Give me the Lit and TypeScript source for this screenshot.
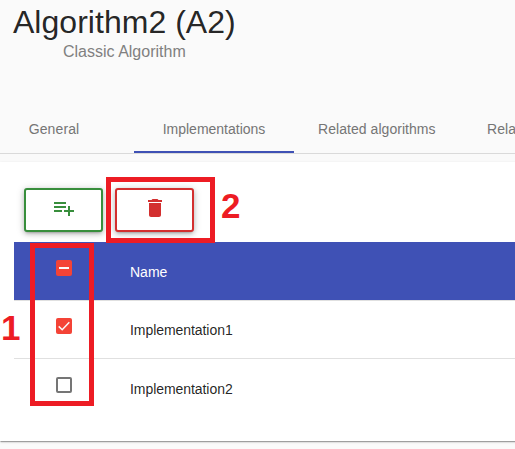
import { LitElement, html, css, svg } from "lit";
import { customElement, state } from "lit/decorators.js";

@customElement("app-root")
export class AppRoot extends LitElement {
  static styles = css`
    :host {
      display: block;
      position: relative;
      width: 515px;
      height: 449px;
      overflow: hidden;
      background: #fafafa;
      font-family: "Liberation Sans", Arial, sans-serif;
      color: rgba(0, 0, 0, 0.87);
    }
    * { box-sizing: border-box; }
    header { height: 105px; padding: 4px 0 0 13px; }
    h1 { margin: 0; font-size: 32px; line-height: 36px; font-weight: 400; white-space: nowrap; letter-spacing: 0.03px; }
    .subtitle { margin: 2px 0 0 50px; font-size: 16px; line-height: 20px; color: #808080; }
    nav {
      display: flex;
      height: 49px;
      margin-left: -26px;
      border-bottom: 1px solid #dadada;
      font-size: 14px;
      color: #757575;
    }
    .tab {
      flex: none;
      min-width: 160px;
      height: 48px;
      padding: 0 24px;
      line-height: 48px;
      text-align: center;
      white-space: nowrap;
    }
    .tab.first { letter-spacing: 0.1px; }
    .tab.wide { min-width: 169px; text-align: left; letter-spacing: 0.05px; }
    .tab.active { border-bottom: 2px solid #3f51b5; }
    .card {
      width: 540px;
      height: 279px;
      margin-top: 8px;
      padding: 26px 0 0 14px;
      background: #fff;
      box-shadow: 0 2px 1px -1px rgba(0, 0, 0, 0.2), 0 1px 1px 0 rgba(0, 0, 0, 0.14), 0 1px 3px 0 rgba(0, 0, 0, 0.12);
    }
    .actions { display: flex; gap: 12px; height: 54px; padding-left: 10px; }
    button {
      display: flex;
      align-items: center;
      justify-content: center;
      width: 79px;
      height: 44px;
      padding: 0 0 4px;
      border: 2px solid currentColor;
      border-radius: 3px;
      background: #fff;
      box-shadow: 0 3px 2px -2px rgba(0, 0, 0, 0.16), 0 2px 5px rgba(0, 0, 0, 0.18), 0 1px 9px rgba(0, 0, 0, 0.16);
    }
    .add { color: #388e3c; }
    .remove { color: #d32f2f; }
    button svg { width: 24px; height: 24px; fill: currentColor; flex: none; }
    .row {
      display: flex;
      align-items: center;
      height: 58px;
      border-top: 1px solid #e0e0e0;
      font-size: 14px;
      padding-left: 42px;
    }
    .row.head { background: #3f51b5; color: #fff; border-top: 0; }
    .row.last { height: 59px; }
    .box {
      flex: none;
      width: 16px;
      height: 16px;
      margin: 0 58px 6px 0;
      border-radius: 2px;
      border: 2px solid #757575;
    }
    .row:not(.head) .box { margin-bottom: 7px; }
    .row.last .box { margin-bottom: 6px; }
    .box.on { border: 0; background: #f44336; }
    .box svg { display: block; width: 16px; height: 16px; fill: none; stroke: #fafafa; }
    .name { line-height: 16px; padding-top: 2px; }
    .row:not(.head) .name { letter-spacing: -0.06px; padding-top: 1px; }
    .row.last .name { padding-top: 2px; }
    .mark { position: absolute; border: 5px solid #ed1c24; }
    .mark.rows { left: 30px; top: 243px; width: 64px; height: 163px; }
    .mark.delete { left: 106px; top: 177px; width: 109px; height: 66px; }
    .digit {
      position: absolute;
      font-weight: 700;
      font-size: 35px;
      line-height: 40px;
      color: #ed1c24;
    }
    .digit.one { left: 1px; top: 308px; }
    .digit.two { left: 221px; top: 186px; }
  `;

  @state() private rows = [
    { name: "Implementation1", checked: true },
    { name: "Implementation2", checked: false },
  ];

  private box(kind: "mixed" | "checked" | "empty") {
    if (kind === "empty") return html`<span class="box"></span>`;
    const mark =
      kind === "mixed"
        ? svg`<path d="M3 8H13" stroke-width="2"/>`
        : svg`<path d="M2.7 8.4L6.2 11.7L13.3 4.3" stroke-width="1.5"/>`;
    return html`<span class="box on"><svg viewBox="0 0 16 16">${mark}</svg></span>`;
  }

  render() {
    return html`
      <header>
        <h1>Algorithm2 (A2)</h1>
        <div class="subtitle">Classic Algorithm</div>
      </header>
      <nav>
        <div class="tab first">General</div>
        <div class="tab active">Implementations</div>
        <div class="tab wide">Related algorithms</div>
        <div class="tab wide">Rela</div>
      </nav>
      <section class="card">
        <div class="actions">
          <button class="add" aria-label="Add">
            <svg viewBox="0 0 24 24"><path d="M14 10H2v2h12v-2zm0-4H2v2h12V6zm4 8v-4h-2v4h-4v2h4v4h2v-4h4v-2h-4zM2 16h8v-2H2v2z"/></svg>
          </button>
          <button class="remove" aria-label="Delete">
            <svg viewBox="0 0 24 24"><path d="M6 19c0 1.1.9 2 2 2h8c1.1 0 2-.9 2-2V7H6v12zM19 4h-3.5l-1-1h-5l-1 1H5v2h14V4z"/></svg>
          </button>
        </div>
        <div class="row head">${this.box("mixed")}<span class="name">Name</span></div>
        ${this.rows.map(
          (r, i) => html`<div class="row ${i === this.rows.length - 1 ? "last" : ""}">
            ${this.box(r.checked ? "checked" : "empty")}<span class="name">${r.name}</span>
          </div>`
        )}
      </section>
      <div class="mark rows"></div>
      <div class="mark delete"></div>
      <span class="digit one">1</span>
      <span class="digit two">2</span>
    `;
  }
}
